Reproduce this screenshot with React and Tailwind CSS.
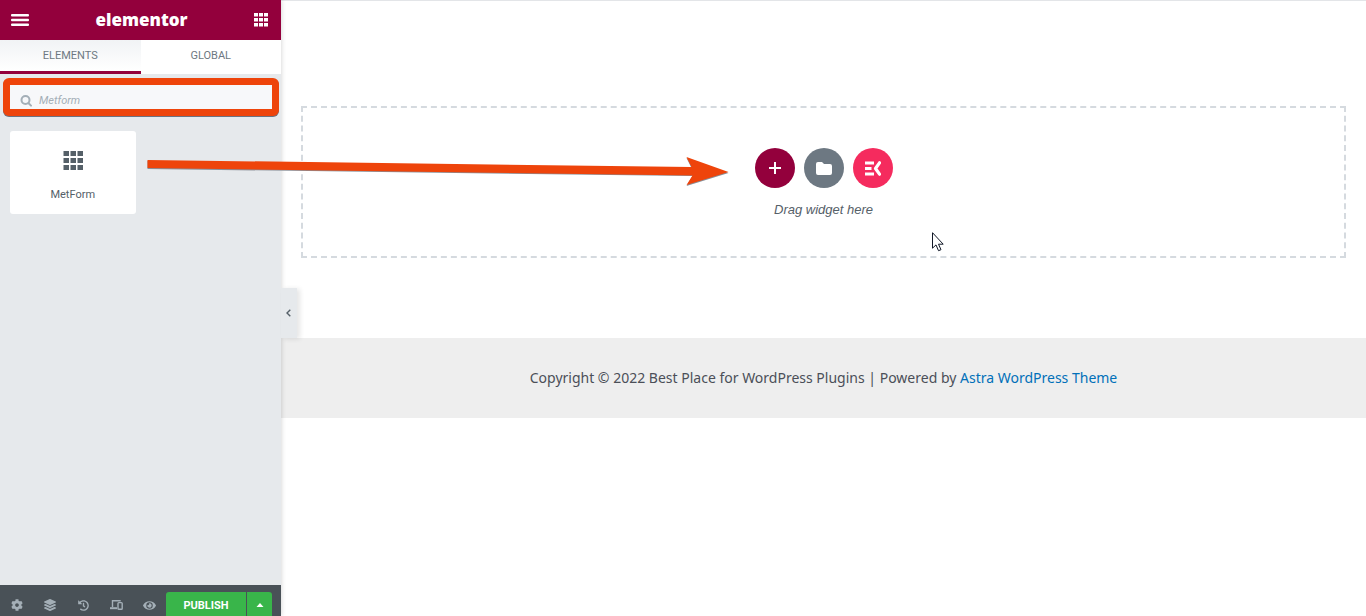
import React from 'react'
import { FaCog, FaEye, FaHistory, FaLayerGroup } from 'react-icons/fa'

const HeaderDotsIcon = () => (
    <svg viewBox="0 0 14 14" className="w-3.5 h-3.5" fill="currentColor">
        {[0, 5, 10].map((y) => [0, 5, 10].map((x) => (
            <rect key={`${x}-${y}`} x={x} y={y} width="4" height="3.5" />
        )))}
    </svg>
)

const FormIcon = () => (
    <svg viewBox="0 0 20 20" className="w-5 h-5" fill="currentColor">
        {[0, 7, 14].map((y) => [0.5, 7.5, 14.5].map((x) => (
            <rect key={`${x}-${y}`} x={x} y={y} width="5.5" height="5" />
        )))}
    </svg>
)

const MenuIcon = () => (
    <svg viewBox="0 0 18 12" className="w-[18px] h-3" fill="currentColor">
        <rect y="0" width="18" height="2.4" rx="1" />
        <rect y="4.8" width="18" height="2.4" rx="1" />
        <rect y="9.6" width="18" height="2.4" rx="1" />
    </svg>
)

const SearchIcon = () => (
    <svg viewBox="0 0 12 12" className="w-3 h-3 shrink-0 text-[#a4afb7]" fill="none" stroke="currentColor" strokeWidth="2" strokeLinecap="round">
        <circle cx="5.5" cy="5" r="4" />
        <path d="M8.6 8.2 11 10.6" />
    </svg>
)

const DevicesIcon = () => (
    <svg viewBox="0 0 13 10" className="w-[13px] h-2.5" fill="none" stroke="currentColor" strokeWidth="1.4">
        <path d="M2.5 7V.7h8.2" />
        <path d="M0 8.2h7" strokeWidth="2" />
        <rect x="8" y="2.6" width="4.2" height="6.6" rx="0.8" />
    </svg>
)

const ElementsKitIcon = () => (
    <svg viewBox="0 0 17 15" className="w-[17px] h-[15px]" fill="none" stroke="currentColor" strokeWidth="3">
        <path d="M1 2h9M1 7.5h6.500M1 13h9" />
        <path d="M15.500 1.800 11.500 7.500l4 5.700" strokeLinejoin="round" strokeLinecap="round" strokeWidth="3.200" />
    </svg>
)

const Pointer = () => (
    <svg viewBox="0 0 12 20" className="absolute left-[932px] top-[232px] w-3 h-5">
        <path d="M.5.7v15.5l3.500-3.300 2.500 5.800 2.500-1-2.500-5.500h4.700z" fill="#fff" stroke="#111827" />
    </svg>
)

const Arrow = () => (
    <svg viewBox="0 0 582 30" className="absolute left-[147px] top-[156px] w-[582px] h-[30px] pointer-events-none">
        <path d="M.5 5 544.500 12 539.500 2 581.500 17 539.500 30 545.500 20 .5 13z" fill="#8a8f98" />
        <path d="M.5 4 544.500 11 539.500 1 581.500 16 539.500 29 545.500 19.500 .5 12z" fill="#ee440b" />
    </svg>
)

const tools = [
    { label: 'Settings', icon: <FaCog size={12} /> },
    { label: 'Navigator', icon: <FaLayerGroup size={12} /> },
    { label: 'History', icon: <FaHistory size={11} /> },
    { label: 'Responsive Mode', icon: <DevicesIcon /> },
    { label: 'Preview Changes', icon: <FaEye size={13} /> },
]

const Panel = () => (
    <aside className="relative z-10 w-[281px] shrink-0 flex flex-col bg-[#e6e9ec] shadow-[0_0_5px_rgba(0,0,0,0.2)]">
        <header className="h-10 pl-[11px] pr-[13px] pb-px flex items-center justify-between bg-[#93003c] text-white">
            <button type="button" aria-label="Menu" className="pt-px"><MenuIcon /></button>
            <h1 className="font-['Open_Sans',sans-serif] text-[17px] leading-5 font-extrabold">elementor</h1>
            <button type="button" aria-label="Widgets Panel"><HeaderDotsIcon /></button>
        </header>

        <nav className="h-[34px] flex text-[11px] leading-4 text-[#6d7882]">
            <button type="button" className="flex-1 pt-px bg-linear-to-b from-[#f1f3f5] to-white border-b-3 border-[#93003c]">ELEMENTS</button>
            <button type="button" className="flex-1 pb-0.5 bg-white">GLOBAL</button>
        </nav>

        <div className="mt-1 ml-[3px] mr-0.5 h-[38px] rounded-md border-7 border-[#ee440b] bg-[#f7f8fa] shadow-[0_1px_0_#6b7280] flex items-center gap-[7px] px-2.5 pt-2">
            <SearchIcon />
            <input
                type="text"
                aria-label="Search Widget"
                placeholder="Metform"
                className="w-full text-[11px] leading-4 italic outline-none bg-transparent placeholder:text-[#a4afb7]"
            />
        </div>

        <div className="px-2.5 pt-[15px] grid grid-cols-2 gap-2.5">
            <button type="button" className="h-[83px] rounded-[3px] bg-white flex flex-col items-center pt-5 gap-4 text-[#556068]">
                <FormIcon />
                <span className="text-[11px] leading-4">MetForm</span>
            </button>
        </div>

        <footer className="mt-auto h-[31px] flex items-end bg-[#495157] text-[#a4afb7]">
            <div className="flex-1 h-6 flex">
                {tools.map(({ label, icon }) => (
                    <button key={label} type="button" aria-label={label} className="flex-1 flex items-center justify-center pt-0.5">{icon}</button>
                ))}
            </div>
            <div className="h-6 mr-[9px] flex gap-px text-white">
                <button type="button" className="w-20 pt-1 rounded-tl-[3px] bg-[#39b54a] text-[11px] leading-4 font-bold">PUBLISH</button>
                <button type="button" aria-label="Save Options" className="w-[25px] pt-0.5 rounded-tr-[3px] bg-[#39b54a] flex items-center justify-center">
                    <svg viewBox="0 0 8 4" className="w-2 h-1" fill="currentColor"><path d="M.5 4 4 0l3.500 4z" /></svg>
                </button>
            </div>
        </footer>

        <button
            type="button"
            aria-label="Hide Panel"
            className="absolute left-full top-72 w-4 h-[50px] pr-0.5 bg-[#e6e9ec] shadow-[3px_1px_5px_rgba(0,0,0,0.1)] flex items-center justify-center text-[#556068]"
        >
            <svg viewBox="0 0 5 8" className="w-[5px] h-2" fill="none" stroke="currentColor" strokeWidth="1.4"><path d="M4.3.7 1 4l3.3 3.3" /></svg>
        </button>
    </aside>
)

const Canvas = () => (
    <main className="flex-1 bg-white border-t border-[#e3e5e8]">
        <section className="mx-5 mt-[105px] mb-20 h-[152px] border-2 border-dashed border-[#d5dadf] pt-10 flex flex-col items-center gap-3">
            <div className="flex gap-[9px] text-white">
                <button type="button" aria-label="Add New Section" className="w-10 h-10 rounded-full bg-[#93003c] flex items-center justify-center">
                    <svg viewBox="0 0 12 12" className="w-3 h-3" stroke="currentColor" strokeWidth="2"><path d="M6 0v12M0 6h12" /></svg>
                </button>
                <button type="button" aria-label="Add Template" className="w-10 h-10 rounded-full bg-[#6d7882] flex items-center justify-center">
                    <svg viewBox="0 0 16 13" className="w-4 h-[13px]" fill="currentColor"><path d="M2 0h4l2 2h6q2 0 2 2v7q0 2-2 2H2q-2 0-2-2V2q0-2 2-2z" /></svg>
                </button>
                <button type="button" aria-label="ElementsKit" className="w-10 h-10 rounded-full bg-[#f52b5e] flex items-center justify-center">
                    <ElementsKitIcon />
                </button>
            </div>
            <p className="font-['Liberation_Sans',sans-serif] text-[13px] leading-5 italic text-[#556068]">Drag widget here</p>
        </section>

        <footer className="h-20 flex items-center justify-center bg-[#eee] font-['Noto_Sans',sans-serif] text-sm leading-6 text-[#4b4f58]">
            <p>
                Copyright © 2022 Best Place for WordPress Plugins | Powered by <a href="#" className="text-[#0170b9]">Astra WordPress Theme</a>
            </p>
        </footer>
    </main>
)

const App = () => {
    return (
        <div className="relative min-h-screen flex font-[Roboto,sans-serif]">
            <Panel />
            <Canvas />
            <div className="absolute inset-0 z-20 pointer-events-none">
                <Arrow />
                <Pointer />
            </div>
        </div>
    )
}

export default App
